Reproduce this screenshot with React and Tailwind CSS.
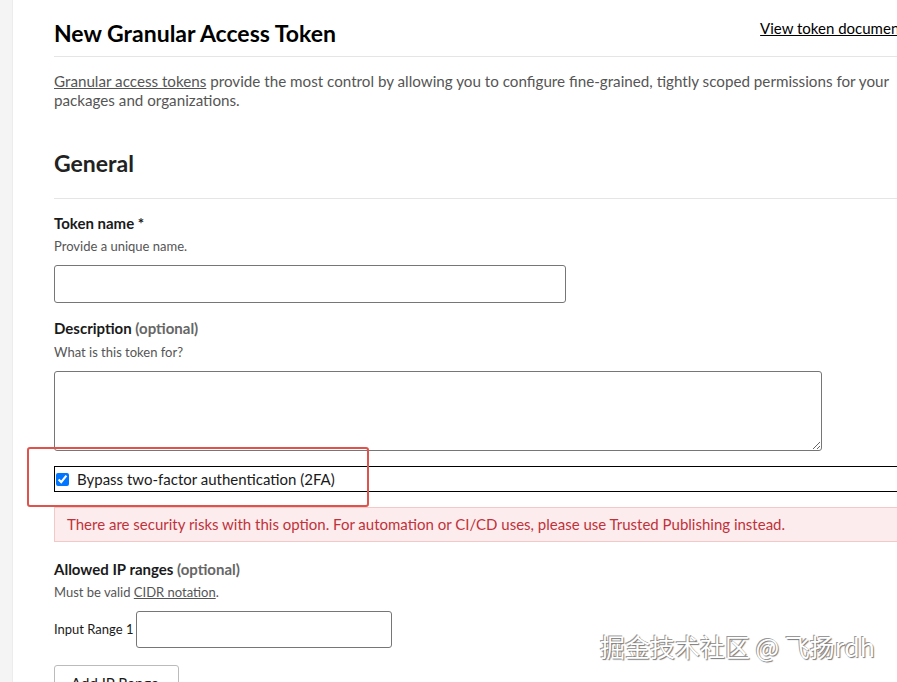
export default function App() {
  return (
    <div
      className="relative flex h-[682px] w-[897px] overflow-hidden bg-white text-[#1a1a1a]"
      style={{ fontFamily: "Lato, 'Noto Sans', sans-serif" }}
    >
      <div className="w-[13px] shrink-0 bg-[#f4f4f4] border-r border-[#ececec]"></div>

      <div className="shrink-0 w-[900px] pl-[41px] pt-[18px]">
        <div className="flex items-end justify-between border-b border-[#e5e5e5] pb-[8px]">
          <h1 className="text-[23px] font-bold leading-[30px] text-black">New Granular Access Token</h1>
          <a className="mr-[-25px] mb-[10px] text-[15px] leading-[20px] text-black underline">View token documentation</a>
        </div>

        <p className="mt-[15px] w-[845px] text-[15.2px] leading-[19px] text-[#555]">
          <a className="underline">Granular access tokens</a> provide the most control by allowing you to configure fine-grained, tightly scoped permissions for your packages and organizations.
        </p>

        <h2 className="mt-[38px] border-b border-[#e5e5e5] pb-[20px] text-[23px] font-bold leading-[30px] text-[#222]">General</h2>

        <div className="mt-[14px]">
          <label className="block text-[15px] font-bold leading-[20px] text-[#1a1a1a]">Token name *</label>
          <p className="mt-[5px] text-[13px] leading-[17px] text-[#555]">Provide a unique name.</p>
          <input className="mt-[10px] block h-[38px] w-[512px] rounded-[3px] border border-[#767676] bg-white" />
        </div>

        <div className="mt-[15px]">
          <label className="block text-[15px] font-bold leading-[20px] text-[#1a1a1a]">
            Description <span className="text-[#666]">(optional)</span>
          </label>
          <p className="mt-[6px] text-[13px] leading-[17px] text-[#555]">What is this token for?</p>
          <textarea className="mt-[10px] block h-[80px] w-[768px] rounded-[3px] border border-[#767676] bg-white"></textarea>
        </div>

        <div className="relative mt-[15px] flex h-[26px] items-center gap-[8px] border border-black pl-[1px]">
          <input type="checkbox" defaultChecked className="m-0 h-[13px] w-[13px] accent-[#0075ff]" />
          <span className="text-[15px] leading-[20px] text-[#1a1a1a]">Bypass two-factor authentication (2FA)</span>
          <div className="pointer-events-none absolute left-[-28px] top-[-20px] h-[60px] w-[342px] rounded-[3px] border-[2.5px] border-[#e0524c]"></div>
        </div>

        <div className="mt-[15px] flex h-[35px] items-center border border-[#f5c8c8] bg-[#fdeced] pl-[12px] text-[15px] text-[#c0323a]">
          There are security risks with this option. For automation or CI/CD uses, please use Trusted Publishing instead.
        </div>

        <div className="mt-[17px]">
          <label className="block text-[15px] font-bold leading-[20px] text-[#1a1a1a]">
            Allowed IP ranges <span className="text-[#666]">(optional)</span>
          </label>
          <p className="mt-[5px] text-[13px] leading-[17px] text-[#555]">
            Must be valid <a className="underline">CIDR notation</a>.
          </p>
          <div className="mt-[10px] flex items-center gap-[3px]">
            <span className="text-[13px] text-[#1a1a1a]">Input Range 1</span>
            <input className="block h-[37px] w-[256px] rounded-[3px] border border-[#767676] bg-white" />
          </div>
          <button className="mt-[17px] h-[36px] w-[125px] rounded-[3px] border border-[#bbb] bg-white text-left pl-[16px] text-[15px] leading-[20px] text-[#1a1a1a]">
            Add IP Range
          </button>
        </div>
      </div>

      <div
        className="pointer-events-none absolute left-[600px] top-[630px] text-[25px] leading-[32px] text-white"
        style={{
          fontFamily: "'Noto Sans CJK SC', sans-serif",
          textShadow: "1px 1px 1px #777, -1px -1px 0 #999",
        }}
      >
        掘金技术社区 @ 飞扬rdh
      </div>
    </div>
  );
}
